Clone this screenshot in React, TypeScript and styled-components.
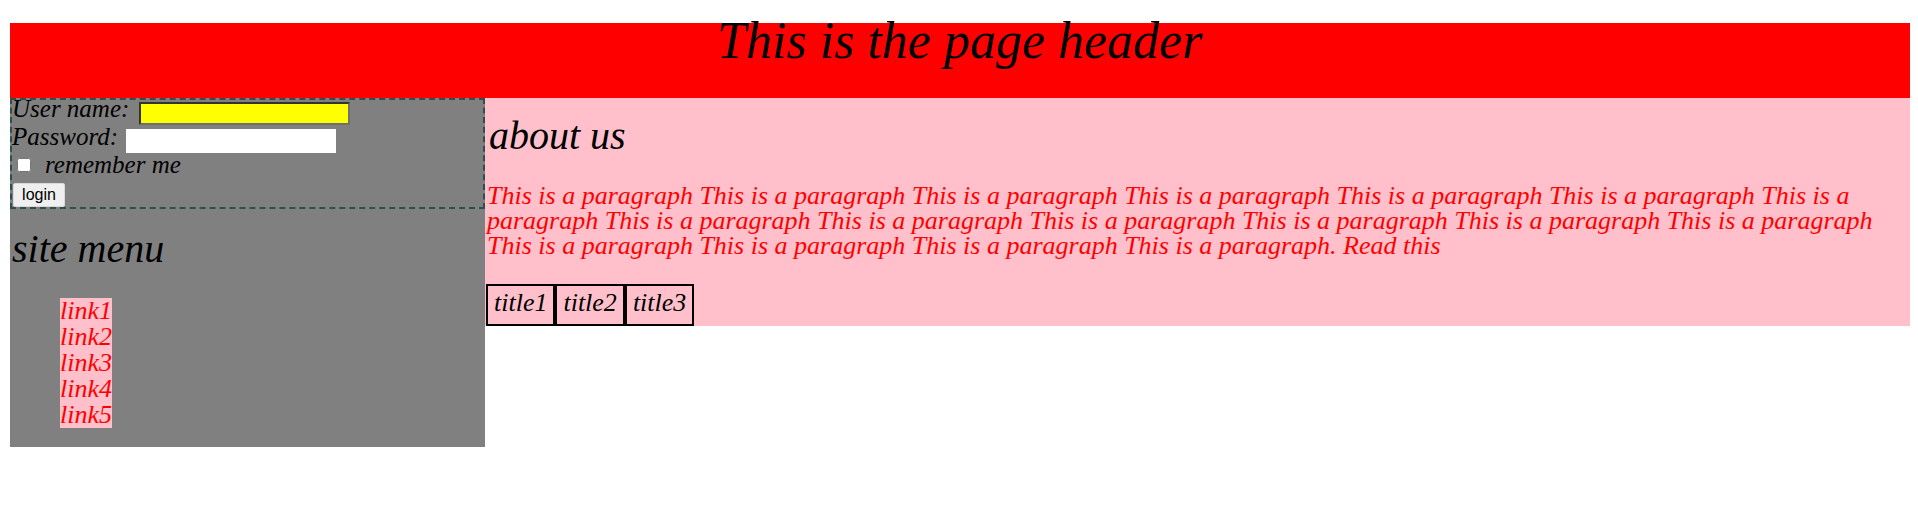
import React from "react";
import styled, { createGlobalStyle } from "styled-components";

const GlobalStyle = createGlobalStyle`
  html, body { margin: 0; padding: 0; background: #ffffff; }
  body { font-family: "Liberation Serif", "Times New Roman", serif; font-style: italic; }
`;

const Page = styled.div`
  padding: 23px 8px 0 10px;
`;

const Header = styled.header`
  background: #ff0000;
  height: 75px;
  display: flex;
  justify-content: center;
  align-items: flex-start;
`;

const HeaderTitle = styled.h1`
  margin: 0;
  font-size: 52px;
  line-height: 35px;
  font-weight: normal;
  font-style: italic;
  color: #000;
`;

const Body = styled.div`
  display: flex;
  align-items: flex-start;
`;

const Sidebar = styled.aside`
  width: 475px;
  flex: none;
  background: #808080;
  padding-bottom: 19px;
  display: flex;
  flex-direction: column;
`;

const LoginBox = styled.form`
  border: 2px dashed #2f4f4f;
  display: flex;
  flex-direction: column;
  margin: 0;
`;

const Row = styled.div<{ $h: number; $gap: number }>`
  height: ${(p) => p.$h}px;
  display: flex;
  align-items: flex-start;
  gap: ${(p) => p.$gap}px;
`;

const Label = styled.label<{ $dy: number }>`
  font-size: 25px;
  line-height: 22px;
  margin-top: ${(p) => p.$dy}px;
  color: #000;
  white-space: nowrap;
`;

const TextInput = styled.input<{ $bg: string; $mt: number }>`
  box-sizing: border-box;
  width: ${(p) => (p.$bg === "yellow" ? 211 : 210)}px;
  height: ${(p) => (p.$bg === "yellow" ? 23 : 24)}px;
  margin: ${(p) => p.$mt}px 0 0 0;
  padding: 0 2px;
  background: ${(p) => p.$bg};
  border: ${(p) => (p.$bg === "yellow" ? "2px solid #6e6e6e" : "none")};
  border-top-color: ${(p) => (p.$bg === "yellow" ? "#333" : "transparent")};
  border-left-color: ${(p) => (p.$bg === "yellow" ? "#333" : "transparent")};
  outline: none;
  font-family: "Liberation Sans", Arial, sans-serif;
  font-size: 13px;
`;

const CheckRow = styled.div`
  height: 24px;
  display: flex;
  align-items: flex-start;
`;

const Check = styled.input`
  width: 14px;
  height: 14px;
  margin: 4px 3px 0 5px;
`;

const CheckLabel = styled.label`
  font-size: 25px;
  line-height: 22px;
  margin-left: 11px;
  margin-top: 0;
  color: #000;
`;

const ButtonRow = styled.div`
  padding: 5px 0 0 1px;
  height: 24px;
`;

const LoginButton = styled.button`
  box-sizing: border-box;
  height: 24px;
  width: 52px;
  padding: 0 6px;
  font-family: "Liberation Sans", Arial, sans-serif;
  font-style: normal;
  font-size: 16px;
  color: #000;
  background: #efefef;
  border: 1px solid #d8d8d8;
  border-radius: 2px;
`;

const SectionTitle = styled.h2<{ $mt: number; $mb: number }>`
  margin: ${(p) => p.$mt}px 0 ${(p) => p.$mb}px 0;
  padding-left: 2px;
  font-size: 40px;
  line-height: 46px;
  font-weight: normal;
  font-style: italic;
  color: #000;
`;

const Menu = styled.ul`
  list-style: none;
  margin: 0;
  padding: 0 0 0 50px;
`;

const MenuItem = styled.li`
  height: 26px;
`;

const MenuLink = styled.a`
  display: inline-block;
  font-size: 26px;
  line-height: 26px;
  color: #ff0000;
  background: #ffc0cb;
  text-decoration: none;
`;

const Main = styled.main`
  flex: 1;
  background: #ffc0cb;
  padding: 0 0 0 2px;
  display: flex;
  flex-direction: column;
  align-items: flex-start;
`;

const Paragraph = styled.p`
  margin: 0 0 26px 0;
  font-size: 26px;
  line-height: 25px;
  color: #ff0000;
`;

const Tabs = styled.table`
  border-collapse: separate;
  border-spacing: 0;
  margin-left: -1px;
`;

const TabCell = styled.td`
  border: 2px solid #000;
  padding: 2px 6px 6px 6px;
  font-size: 26px;
  line-height: 30px;
  color: #000;
`;

const links = ["link1", "link2", "link3", "link4", "link5"];
const titles = ["title1", "title2", "title3"];

export default function App() {
  const text =
    Array.from({ length: 17 }, () => "This is a paragraph").join(" ") +
    ". Read this";
  return (
    <>
      <GlobalStyle />
      <Page>
        <Header>
          <HeaderTitle>This is the page header</HeaderTitle>
        </Header>
        <Body>
          <Sidebar>
            <LoginBox onSubmit={(e) => e.preventDefault()}>
              <Row $h={27} $gap={10}>
                <Label $dy={-2}>User name:</Label>
                <TextInput $bg="yellow" $mt={2} type="text" />
              </Row>
              <Row $h={27} $gap={8}>
                <Label $dy={-1}>Password:</Label>
                <TextInput $bg="white" $mt={2} type="password" />
              </Row>
              <CheckRow>
                <Check type="checkbox" />
                <CheckLabel>remember me</CheckLabel>
              </CheckRow>
              <ButtonRow>
                <LoginButton type="submit">login</LoginButton>
              </ButtonRow>
            </LoginBox>
            <SectionTitle $mt={17} $mb={26}>site menu</SectionTitle>
            <Menu>
              {links.map((l) => (
                <MenuItem key={l}>
                  <MenuLink href="#">{l}</MenuLink>
                </MenuItem>
              ))}
            </Menu>
          </Sidebar>
          <Main>
            <SectionTitle $mt={15} $mb={24}>about us</SectionTitle>
            <Paragraph>{text}</Paragraph>
            <Tabs>
              <tbody>
                <tr>
                  {titles.map((t) => (
                    <TabCell key={t}>{t}</TabCell>
                  ))}
                </tr>
              </tbody>
            </Tabs>
          </Main>
        </Body>
      </Page>
    </>
  );
}
